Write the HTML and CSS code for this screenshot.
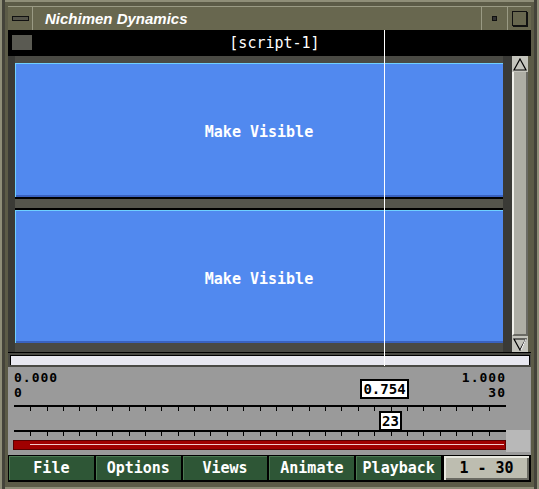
FILE: index.html
```html
<!DOCTYPE html>
<html>
<head>
<meta charset="utf-8">
<link rel="stylesheet" href="styles.css">
</head>
<body>
<div class="frame">
  <div class="titlebar">
    <div class="tb-btn tb-menu"><span class="slot"></span></div>
    <div class="title">Nichimen Dynamics</div>
    <div class="tb-btn tb-min"><span class="dot"></span></div>
    <div class="tb-btn tb-max"><span class="sq"></span></div>
  </div>
  <div class="header">
    <span class="hdr-sq"></span>
    <span class="hdr-title">[script-1]</span>
  </div>
  <div class="work">
    <div class="strip-left"></div>
    <div class="panels">
      <div class="panel p1">Make Visible</div>
      <div class="sep"></div>
      <div class="panel p2">Make Visible</div>
    </div>
    <div class="strip-right"></div>
    <div class="scroll">
      <div class="arrow up">
        <svg width="14" height="13" viewBox="0 0 14 13"><path d="M7 1 L13 12 L1 12 Z" fill="none" stroke="#000" stroke-width="1.2"/></svg>
      </div>
      <div class="thumb"></div>
      <div class="arrow down">
        <svg width="14" height="13" viewBox="0 0 14 13"><path d="M1 1 L13 1 L7 12 Z" fill="none" stroke="#000" stroke-width="1.2"/><path d="M8 12 L13 1" stroke="#fff" stroke-width="1"/></svg>
      </div>
    </div>
  </div>
  <div class="timebar"><div class="timefill"></div></div>
  <div class="controls">
    <div class="labels">
      <div class="lab-l"><div>0.000</div><div>0</div></div>
      <div class="lab-r"><div>1.000</div><div>30</div></div>
    </div>
    <svg class="ruler r1" width="492" height="8" viewBox="0 0 492 8">
      <rect x="0" y="0" width="492" height="2" fill="#000"/>
    </svg>
    <svg class="ruler r2" width="492" height="8" viewBox="0 0 492 8">
      <rect x="0" y="0" width="492" height="2" fill="#000"/>
    </svg>
    <div class="redrow">
      <div class="redbar"><div class="redline"></div></div>
      <div class="redpad"></div>
    </div>
    <div class="valbox v1">0.754</div>
    <div class="valbox v2">23</div>
  </div>
  <div class="menubar">
    <div class="mbtn">File</div>
    <div class="mbtn">Options</div>
    <div class="mbtn">Views</div>
    <div class="mbtn">Animate</div>
    <div class="mbtn">Playback</div>
    <div class="range">1 - 30</div>
  </div>
</div>
<div class="cursor"></div>
<script>
  document.querySelectorAll('.ruler').forEach(function(svg){
    for (var i = 1; i < 30; i++) {
      var x = Math.round(i * 16.37);
      var r = document.createElementNS('http://www.w3.org/2000/svg','rect');
      r.setAttribute('x', x); r.setAttribute('y', 2);
      r.setAttribute('width', 1); r.setAttribute('height', 4);
      r.setAttribute('fill', '#000');
      svg.appendChild(r);
    }
  });
</script>
</body>
</html>
```
FILE: styles.css
```css
html, body {
  margin: 0;
  padding: 0;
  width: 539px;
  height: 489px;
  overflow: hidden;
  background: #5c5b47;
}
.frame {
  position: relative;
  box-sizing: border-box;
  width: 539px;
  height: 489px;
  padding: 6px 8px 7px 8px;
  background: #5c5b47;
  box-shadow: inset 2px 0 0 #8f8e78, inset 5px 0 0 #44433a, inset -2px 0 0 #8f8e78, inset -5px 0 0 #44433a, inset 0 2px 0 #8f8e78, inset 0 -2px 0 #8f8e78;
  display: flex;
  flex-direction: column;
  font-family: "DejaVu Sans Mono", "Liberation Mono", monospace;
}
.frame > * { flex-shrink: 0; }
.titlebar {
  height: 24px;
  display: flex;
  align-items: stretch;
  background: #68674f;
  border-top: 1px solid #9a9a84;
  box-sizing: border-box;
}
.tb-btn {
  display: flex;
  align-items: center;
  justify-content: center;
}
.tb-menu {
  width: 24px;
  border-right: 1px solid #9a9a84;
}
.slot {
  width: 15px;
  height: 3px;
  border: 1px solid #111;
  background: #55544a;
}
.title {
  flex: 1;
  padding-left: 12px;
  color: #fff;
  font-family: "Liberation Sans", Arial, sans-serif;
  font-style: italic;
  font-weight: bold;
  font-size: 15px;
  line-height: 23px;
}
.tb-min {
  width: 25px;
  border-left: 1px solid #9a9a84;
}
.dot {
  width: 3px;
  height: 3px;
  border: 1px solid #111;
  background: #333;
}
.tb-max {
  width: 23px;
  border-left: 1px solid #9a9a84;
}
.sq {
  width: 13px;
  height: 13px;
  border: 1px solid #111;
  box-shadow: 1px 1px 0 #111;
}
.header {
  height: 26px;
  background: #000;
  display: flex;
  align-items: center;
  position: relative;
}
.hdr-sq {
  position: absolute;
  left: 4px;
  top: 5px;
  width: 20px;
  height: 15px;
  background: #5a5a52;
}
.hdr-title {
  flex: 1;
  text-align: center;
  padding-left: 10px;
  color: #fff;
  font-size: 15px;
  line-height: 26px;
}
.work {
  height: 296px;
  display: flex;
}
.strip-left {
  width: 7px;
  background: #3b3b36;
}
.panels {
  width: 488px;
  display: flex;
  flex-direction: column;
  background: #4a4a44;
  padding-top: 7px;
  padding-bottom: 9px;
  box-sizing: border-box;
}
.panel {
  background: #5189ef;
  color: #fff;
  font-weight: bold;
  font-size: 15px;
  display: flex;
  align-items: center;
  justify-content: center;
  padding-top: 4px;
  box-sizing: border-box;
  flex-shrink: 0;
}
.p1 { height: 134px; box-shadow: inset 1px 0 0 #6fd0ff, inset 0 1px 0 #6fd0ff, inset 0 -2px 0 #3a62c0; }
.p2 { height: 133px; box-shadow: inset 1px 0 0 #6fd0ff, inset 0 1px 0 #6fd0ff, inset 0 -2px 0 #3a62c0; }
.sep {
  height: 13px;
  flex-shrink: 0;
  background: #55554c;
  border-top: 2px solid #000;
  border-bottom: 2px solid #000;
  box-sizing: border-box;
}
.strip-right {
  width: 9px;
  background: #3a3a36;
}
.scroll {
  width: 16px;
  display: flex;
  flex-direction: column;
  background: #b4b4aa;
}
.arrow {
  height: 16px;
  display: flex;
  align-items: center;
  justify-content: center;
  background: #c4c4bc;
}
.thumb {
  flex: 1;
  background: #aeaea5;
  border-left: 2px solid #f0f0ea;
  border-right: 2px solid #6a6a64;
  border-bottom: 2px solid #6a6a64;
}
.timebar {
  height: 15px;
  background: #4a4a44;
  border-top: 1px solid #000;
  box-sizing: border-box;
  padding: 2px 1px 1px 2px;
}
.timefill {
  height: 10px;
  background: #e8e8f0;
  border: 1px solid #000;
  border-bottom: none;
  box-sizing: border-box;
}
.controls {
  position: relative;
  height: 88px;
  background: #9a9a9a;
  padding: 3px 26px 0 6px;
  box-sizing: border-box;
  display: flex;
  flex-direction: column;
}
.controls > * { flex-shrink: 0; }
.labels {
  display: flex;
  justify-content: space-between;
  font-size: 13px;
  letter-spacing: 1px;
  line-height: 15px;
  font-weight: bold;
  color: #000;
}
.labels > div {
  display: flex;
  flex-direction: column;
}
.lab-r { align-items: flex-end; margin-right: -1px; }
.ruler { display: block; width: 492px; height: 8px; }
.r1 { margin-top: 5px; }
.r2 { margin-top: 17px; }
.redrow {
  display: flex;
  margin-top: 2px;
  margin-left: -1px;
  margin-right: -25px;
  height: 10px;
}
.redbar {
  width: 493px;
  height: 10px;
  background: #a00000;
  border: 1px solid #5a0000;
  box-sizing: border-box;
  position: relative;
}
.redline {
  position: absolute;
  left: 16px;
  right: 1px;
  top: 3px;
  height: 1px;
  background: #f0c8c8;
}
.redpad {
  flex: 1;
  margin-top: -10px;
  height: 22px;
  background: #b8b8b8;
}
.valbox {
  position: absolute;
  background: #fff;
  border: 2px solid #000;
  color: #000;
  font-size: 14px;
  font-weight: bold;
  line-height: 15px;
  text-align: center;
  box-sizing: border-box;
}
.v1 { left: 352px; top: 12px; width: 49px; height: 20px; padding-top: 1px; }
.v2 { left: 371px; top: 44px; width: 23px; height: 20px; padding-top: 1px; }
.menubar {
  height: 27px;
  background: #000;
  display: flex;
  gap: 2px;
  padding: 1px 2px 2px 1px;
  box-sizing: border-box;
}
.mbtn {
  width: 85px;
  background: #2e5636;
  color: #fff;
  font-weight: bold;
  font-size: 15px;
  display: flex;
  align-items: center;
  justify-content: center;
  box-shadow: inset 1px 1px 0 #4c7a52;
}
.range {
  margin-left: 1px;
  width: 85px;
  background: #bdbdb0;
  color: #000;
  font-size: 15px;
  font-weight: bold;
  display: flex;
  align-items: center;
  justify-content: center;
  box-shadow: inset 2px 2px 0 #e8e8e0, inset -2px -2px 0 #6a6a62;
}
.cursor {
  position: absolute;
  left: 384px;
  top: 30px;
  width: 1px;
  height: 336px;
  background: #fff;
}
```
